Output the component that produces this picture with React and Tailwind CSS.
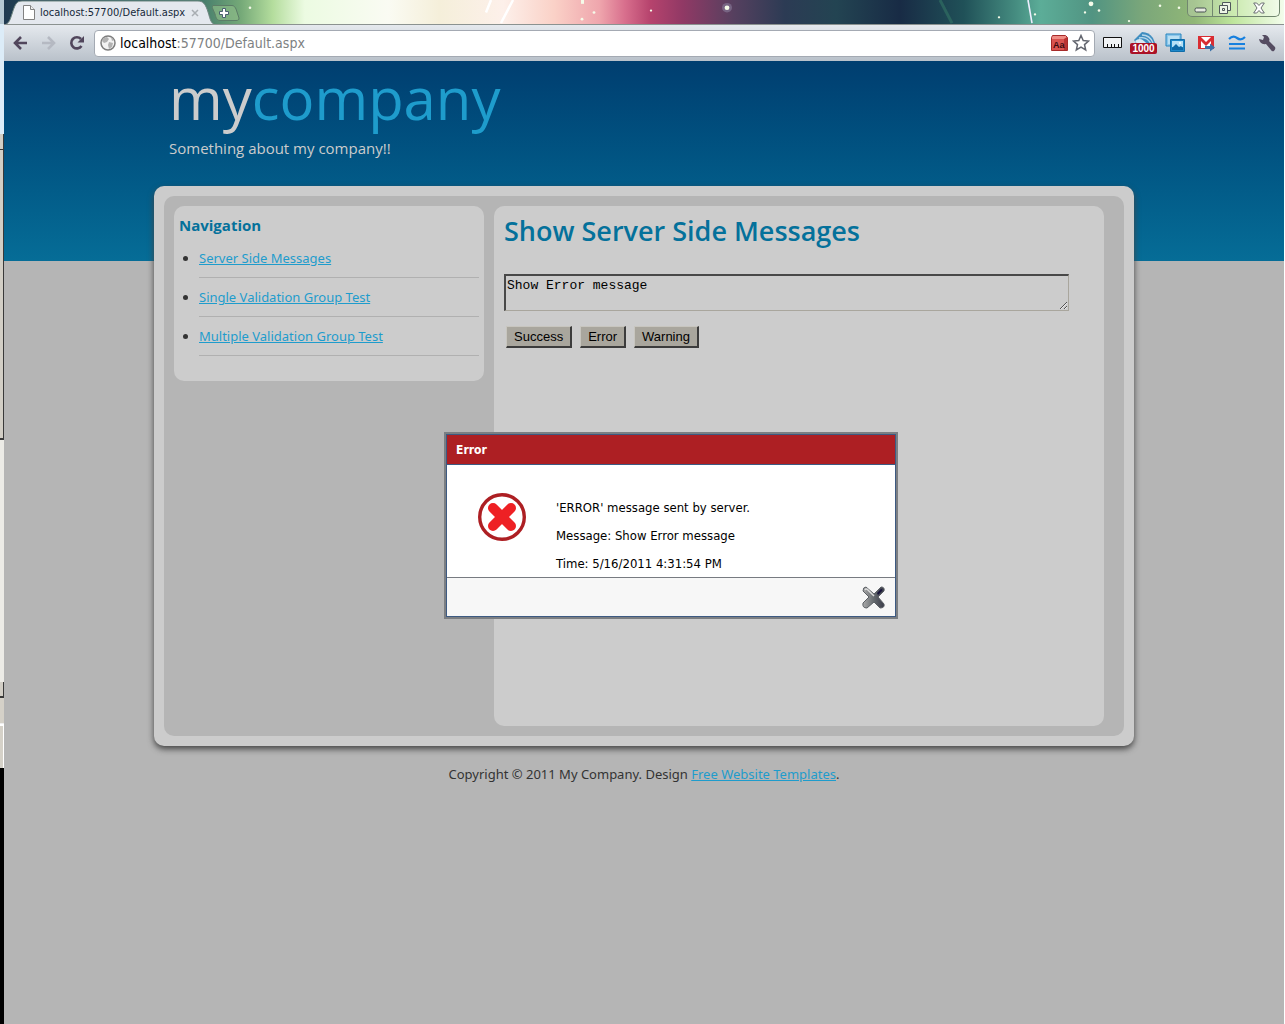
import React from "react";

const navLinks = [
  "Server Side Messages",
  "Single Validation Group Test",
  "Multiple Validation Group Test",
];

function Wallpaper() {
  return (
    <svg className="absolute inset-0 h-full w-full" viewBox="0 0 1280 25" preserveAspectRatio="none" aria-hidden="true">
      <defs>
        <linearGradient id="aurora" x1="0" x2="1" y1="0" y2="0">
          <stop offset="0" stopColor="#203a50" />
          <stop offset=".1" stopColor="#2f6864" />
          <stop offset=".155" stopColor="#467d6c" />
          <stop offset=".185" stopColor="#75a978" />
          <stop offset=".21" stopColor="#b4dd9d" />
          <stop offset=".235" stopColor="#ecfbe2" />
          <stop offset=".3" stopColor="#fafbf3" />
          <stop offset=".34" stopColor="#f5efda" />
          <stop offset=".39" stopColor="#fdf0ea" />
          <stop offset=".43" stopColor="#fad1c7" />
          <stop offset=".465" stopColor="#efa6ad" />
          <stop offset=".485" stopColor="#d86f8d" />
          <stop offset=".505" stopColor="#b6436d" />
          <stop offset=".53" stopColor="#913965" />
          <stop offset=".57" stopColor="#56405f" />
          <stop offset=".61" stopColor="#2c3b54" />
          <stop offset=".65" stopColor="#234452" />
          <stop offset=".7" stopColor="#182b45" />
          <stop offset=".75" stopColor="#205158" />
          <stop offset=".79" stopColor="#458c80" />
          <stop offset=".81" stopColor="#5cad98" />
          <stop offset=".85" stopColor="#519482" />
          <stop offset=".89" stopColor="#7ba77a" />
          <stop offset=".93" stopColor="#91b777" />
          <stop offset=".96" stopColor="#bee59c" />
          <stop offset="1" stopColor="#f3fdec" />
        </linearGradient>
      </defs>
      <rect width="1280" height="25" fill="url(#aurora)" />
      <g stroke="#fff">
        <path d="M487 0l-5 13M509 0l-12 24" strokeWidth="2.5" />
        <path d="M1024 0l4 24" stroke="#eef" strokeWidth="1.6" />
        <path d="M936 0l12 24" stroke="#347565" strokeWidth="3" opacity=".6" />
      </g>
      <g fill="#f5fbe9">
        <circle cx="723" cy="8" r="5" fill="#897d9b" opacity=".6" />
        <circle cx="723" cy="8" r="2.4" />
        <circle cx="1087" cy="4" r="2.4" />
        <circle cx="1081" cy="13" r="1.2" />
        <circle cx="1095" cy="11" r="1.3" />
        <circle cx="1156" cy="6" r="1.3" />
        <circle cx="1175" cy="8" r="1.3" />
        <circle cx="1125" cy="22" r="1.2" />
        <circle cx="995" cy="18" r="1.2" />
        <circle cx="1031" cy="15" r="1.2" />
        <circle cx="246" cy="8" r="1.3" />
        <rect x="577" y="0" width="3" height="4" />
        <circle cx="578" cy="20" r="1.4" />
        <circle cx="590" cy="13" r="1.4" />
        <circle cx="647" cy="11" r="1.2" />
      </g>
    </svg>
  );
}

function TabStrip() {
  return (
    <div className="relative flex h-[25px] justify-between overflow-hidden border-b border-[#8b9290]">
      <Wallpaper />
      <div className="relative flex">
        <div className="relative flex h-[25px] w-[212px] items-center pl-[19px]">
          <svg className="absolute inset-0" width="212" height="25" viewBox="0 0 212 25" aria-hidden="true">
            <path d="M0 25C5 24 6 20 8 14C11 5 12 1 18 1H194C199 1 201 4 203 9C206 17 206 24 212 25Z" fill="#e4e8ee" stroke="#6f8580" />
          </svg>
          <svg className="relative" width="12" height="15" viewBox="0 0 12 15" aria-hidden="true">
            <path d="M.5.5H7.500L11.500 4.500V14.500H.5Z" fill="#fff" stroke="#828282" />
            <path d="M7.500.5V4.500H11.500" fill="#eee" stroke="#828282" />
          </svg>
          <span className="relative ml-[5px] w-[151px] whitespace-nowrap font-['DejaVu_Sans_Condensed','Noto_Sans',sans-serif] text-[11px] leading-4 text-[#16283a]">localhost:57700/Default.aspx</span>
          <button type="button" aria-label="Close tab" className="relative">
            <svg width="8" height="8" viewBox="0 0 8 8"><path d="M1 1l6 6M7 1l-6 6" stroke="#a8adb2" strokeWidth="1.500" /></svg>
          </button>
        </div>
        <button type="button" aria-label="New tab" className="relative -ml-1 h-[22px]">
          <svg width="28" height="22" viewBox="0 0 28 22">
            <path d="M1 5.500H20C22 5.500 23 7 24 9L27 18C27 20 26 20.500 24 20.500H8C5 20.500 4 18 3 14L0 7Z" fill="#8fbd88" fillOpacity=".65" stroke="#5c7d67" />
            <path d="M10.500 8.500h3v3h3v3h-3v3h-3v-3h-3v-3h3z" fill="#fff" stroke="#496170" />
          </svg>
        </button>
      </div>
      <div className="relative mr-1 flex h-[17px] overflow-hidden rounded-b-[5px] border border-t-0 border-[#71876f] bg-white/20">
        <button type="button" aria-label="Minimize" className="grid w-[25px] place-items-center border-r border-[#71876f]">
          <svg width="13" height="16" viewBox="0 0 13 16"><rect x="1" y="8" width="11" height="4" rx="1.500" fill="#e6eadf" stroke="#454f50" /></svg>
        </button>
        <button type="button" aria-label="Restore" className="grid w-[25px] place-items-center border-r border-[#8c9688]">
          <svg width="14" height="14" viewBox="0 0 14 14" fill="#eef5e6" stroke="#50585c"><path d="M4.500 1.500h8v8h-8z" /><path d="M1.500 4.500h8v8h-8z" /><path d="M4.500 7.500h2v2h-2z" /></svg>
        </button>
        <button type="button" aria-label="Close" className="grid w-[41px] place-items-center">
          <svg width="12" height="12" viewBox="0 0 12 12"><path d="M.7 1h3l2.300 2.500L8.300 1h3L8 6l3.300 5h-3L6 8.500 3.700 11h-3L4 6z" fill="#fff" stroke="#6a6f72" /></svg>
        </button>
      </div>
    </div>
  );
}

function Toolbar() {
  return (
    <div className="flex h-9 items-center bg-linear-to-b from-[#e5e9ee] to-[#b9c1ca] pl-[9px] pr-2">
      <button type="button" aria-label="Back">
        <svg width="15" height="14" viewBox="0 0 15 14" fill="none" stroke="#51465c" strokeWidth="2.600"><path d="M14 7H2M8 1L2 7l6 6" /></svg>
      </button>
      <button type="button" aria-label="Forward" className="ml-[13px]">
        <svg width="15" height="14" viewBox="0 0 15 14" fill="none" stroke="#b5b9c2" strokeWidth="2.600"><path d="M1 7h12M7 1l6 6-6 6" /></svg>
      </button>
      <button type="button" aria-label="Reload" className="ml-[13px]">
        <svg width="16" height="16" viewBox="0 0 16 16"><path d="M12.500 11A5.600 5.600 0 1 1 12 4" fill="none" stroke="#51465c" strokeWidth="2.600" /><path d="M15 1v6.500H8.500z" fill="#51465c" /></svg>
      </button>
      <div className="ml-[9px] flex h-[27px] min-w-0 flex-1 items-center rounded border border-[#a4aab3] bg-white pl-[5px] pr-1">
        <svg width="16" height="16" viewBox="0 0 16 16" aria-hidden="true">
          <circle cx="8" cy="8" r="7" fill="#f2f2f2" stroke="#7d7d7d" strokeWidth="1.500" />
          <path d="M3 3l4-1 2 2-2 3-3 1-2-2zM9 7l4 1-1 4-3 2-1-4zM11 2l3 3-2 1z" fill="#b2b2b2" />
        </svg>
        <div className="ml-1 flex min-w-0 flex-1 font-['DejaVu_Sans_Condensed','Noto_Sans',sans-serif] text-[14px] leading-5">
          <label htmlFor="address" className="text-black">localhost</label>
          <input id="address" type="text" defaultValue=":57700/Default.aspx" className="min-w-0 flex-1 bg-transparent text-[#7d8182] outline-none" />
        </div>
        <button type="button" aria-label="Dictionary">
          <svg width="18" height="18" viewBox="0 0 18 18"><path d="M2.500 1.500h13l2 2v13h-16v-13z" fill="#ef8c84" stroke="#a62b2a" /><path d="M2 5h12v11H2z" fill="#d9534f" /><path d="M14 5l3-2v13h-3" fill="#b33" /><text x="3" y="14" fontSize="9" fontWeight="bold" fontFamily="Liberation Sans, sans-serif" fill="#3b0a10">Aa</text></svg>
        </button>
        <button type="button" aria-label="Bookmark" className="ml-1">
          <svg width="18" height="18" viewBox="0 0 18 18"><path d="M9 1.500l2.200 5 5.300.500-4 3.600 1.200 5.400L9 13.200 4.300 16l1.200-5.400-4-3.600 5.300-.5z" fill="#fff" stroke="#63666f" strokeWidth="1.500" /></svg>
        </button>
      </div>
      <div className="ml-2 flex items-center gap-3">
        <button type="button" aria-label="Ruler">
          <svg width="19" height="12" viewBox="0 0 19 12"><path d="M.5.5h18v10H.5z" fill="#f1f3f5" stroke="#111" /><path d="M4.500 10V7M8.500 10V7M11.500 10V7M15.500 10V7" stroke="#111" /></svg>
        </button>
        <button type="button" aria-label="Feed, 1000 items" className="-mx-1">
          <svg width="27" height="24" viewBox="0 0 27 24">
            <path d="M4 9L12 1q7 0 11 6l2 5-5 3H8z" fill="#3f8dc0" />
            <path d="M5 10q5-4 9 0t6 4H8z" fill="#d9e9f3" />
            <path d="M9 7q8-2 12 6M12 4q8 0 11 8" fill="none" stroke="#b9d8ea" strokeWidth="1.300" />
            <rect y="12" width="27" height="11" rx="2" fill="#ab1126" />
            <text x="13.500" y="21" textAnchor="middle" fontSize="10" fontWeight="bold" fontFamily="Liberation Sans, sans-serif" fill="#fff">1000</text>
          </svg>
        </button>
        <button type="button" aria-label="Pictures">
          <svg width="20" height="20" viewBox="0 0 20 20"><path d="M1 1h15v12H1z" fill="#8cc6ea" stroke="#2685bf" /><path d="M3 3h11v8H3z" fill="#b9dff3" /><path d="M5.500 6.500h14v12h-14z" fill="#1d87c9" stroke="#106da9" /><path d="M7 8h11v6H7z" fill="#b5e0f6" /><path d="M7 15l4-4 3 3 2-1 2 2v2H7z" fill="#0d68a6" /><circle cx="15" cy="10" r="1" fill="#fff" /></svg>
        </button>
        <button type="button" aria-label="Mail">
          <svg width="19" height="17" viewBox="0 0 19 17"><path d="M1.500 1.500h15v12h-15z" fill="#fff" stroke="#d92d32" /><path d="M1 1h2l6 6 6-6h2v13h-3V6L9 11 4 6v8H1z" fill="#d92d32" /><path d="M8 11h5V8.500l5 4-5 4V14H8z" fill="#3a71a8" /></svg>
        </button>
        <button type="button" aria-label="Approximate">
          <svg width="18" height="16" viewBox="0 0 18 16" fill="none" stroke="#1780df" strokeWidth="2.200"><path d="M1 4q4-4 8-1t8-1M1 9h16M1 13.500h16" /></svg>
        </button>
        <button type="button" aria-label="Settings">
          <svg width="18" height="17" viewBox="0 0 18 17"><path d="M1 4l4 1 1-3-2-2q5-1 7 3 1 2 0 3l6 6q1 2-1 4-2 1-3-1L8 9Q2 10 1 4z" fill="#554c61" /></svg>
        </button>
      </div>
    </div>
  );
}

function WindowEdge() {
  return (
    <div className="flex w-1 shrink-0 flex-col bg-black" aria-hidden="true">
      <div className="h-6 bg-[#b7c9d3]" />
      <div className="h-[110px] bg-[#dcecf8]" />
      <div className="h-4 border-b border-r border-[#393939] bg-[#d2cec5]" />
      <div className="h-[290px] border-b-2 border-r border-[#393939] bg-[#d2cec5]" />
      <div className="h-[242px] bg-[#ecebe6]" />
      <div className="h-4 border-b-2 border-r border-[#393939] bg-[#d2cec5]" />
      <div className="h-[26px] border-b border-[#eee] bg-[#d5d1c8]" />
      <div className="h-11 border-t-2 border-r border-white bg-[#d5d1c8]" />
    </div>
  );
}

function ErrorDialog() {
  return (
    <div role="dialog" aria-labelledby="dialog-title" className="absolute top-[226px] -left-[50px] w-[454px] border-2 border-[#7b7e82] bg-white font-['DejaVu_Sans_Condensed','Noto_Sans',sans-serif] text-[13px] text-black">
      <div className="border border-[#3d5a82]">
        <h2 id="dialog-title" className="border-b border-[#3d5a82] bg-[#ad1f23] px-[9px] pt-[7px] pb-1.5 text-[12px] leading-4 font-bold text-white">Error</h2>
        <div className="flex gap-[30px] pt-7 pl-[31px]">
          <svg width="48" height="48" viewBox="0 0 48 48" aria-hidden="true">
            <circle cx="24" cy="24" r="22.300" fill="#fff" stroke="#ad1f23" strokeWidth="3.400" />
            <path d="M15 15L33 33M33 15L15 33" stroke="#ee2024" strokeWidth="10" strokeLinecap="round" />
          </svg>
          <div className="flex flex-col gap-3 pt-[7px] pb-[5px] leading-4">
            <p>'ERROR' message sent by server.</p>
            <p>Message: Show Error message</p>
            <p>Time: 5/16/2011 4:31:54 PM</p>
          </div>
        </div>
        <div className="flex h-[39px] items-center justify-end border-t border-[#777b81] bg-[#f7f7f7] pr-2.5">
          <button type="button" aria-label="Close message">
            <svg width="23" height="23" viewBox="0 0 23 23">
              <defs><linearGradient id="steel" x1="0" x2="1" y1="0" y2="0"><stop stopColor="#aaa" /><stop offset=".5" stopColor="#676c70" /><stop offset="1" stopColor="#3a3c49" /></linearGradient></defs>
              <path d="M4 1l8 7 7-7q4 0 3 4l-6 6 6 7q1 4-4 4l-6-6-7 6q-5 0-4-5l6-6-6-6q0-4 3-4z" fill="url(#steel)" stroke="#5c6065" />
              <path d="M15 7l4-4q2 0 1 2l-4 4z" fill="#17133a" /><path d="M3 4q1-2 3 0l6 6" fill="none" stroke="#ddd" strokeWidth="1.500" />
            </svg>
          </button>
        </div>
      </div>
    </div>
  );
}

const buttonClass =
  "h-[22px] border border-t-[#c8c6bf] border-l-[#c8c6bf] border-r-2 border-b-2 border-r-[#3c3c3c] border-b-[#3c3c3c] bg-[#a9a69d] px-[7px] font-['Liberation_Sans',Arial,sans-serif] text-[13px] leading-5 text-black";

export default function App() {
  return (
    <div className="flex min-h-screen border-r border-white bg-[#b5b5b5] font-['Noto_Sans','Open_Sans',sans-serif] text-[13px] text-[#333]">
      <WindowEdge />
      <div className="min-w-0 flex-1">
        <TabStrip />
        <Toolbar />
        <header className="h-[200px] bg-linear-to-b from-[#003e70] to-[#066d97] font-['Open_Sans','Noto_Sans',sans-serif]">
          <div className="mx-auto w-full max-w-[980px] px-[15px]">
            <h1 className="pt-px text-[58px] leading-[72px] text-[#ccc]">my<span className="text-[#1e9ccc]">company</span></h1>
            <p className="mt-1 text-[15px] leading-5 text-[#ccc]">Something about my company!!</p>
          </div>
        </header>
        <main className="relative mx-auto -mt-[75px] w-full max-w-[980px] rounded-[10px] bg-[#ccc] p-2.5 shadow-[0_3px_6px_#444]">
          <div className="flex items-start gap-2.5 rounded-[10px] bg-[#b5b5b5] p-2.5 pr-5">
            <nav className="w-[310px] shrink-0 rounded-[10px] bg-[#ccc] px-[5px] pt-2 pb-[25px]">
              <h2 className="font-['Open_Sans','Noto_Sans',sans-serif] text-[15px] leading-[22px] font-bold text-[#04719b]">Navigation</h2>
              <ul className="list-disc pt-[3px] pl-5">
                {navLinks.map((label) => (
                  <li key={label} className="border-b border-[#b0b0b0] py-[9px] leading-5">
                    <a href="#" className="text-[#1e9ccc] underline">{label}</a>
                  </li>
                ))}
              </ul>
            </nav>
            <section className="relative min-h-[520px] min-w-0 flex-1 rounded-[10px] bg-[#ccc] px-2.5 pt-[7px]">
              <h2 className="font-['Open_Sans','Noto_Sans',sans-serif] text-[27px] leading-9 font-semibold text-[#04719b]">Show Server Side Messages</h2>
              <textarea id="message" aria-label="Message" defaultValue="Show Error message" className="mt-[25px] block h-[37px] w-[565px] max-w-full border border-t-2 border-t-[#484848] border-l-2 border-l-[#484848] border-r-[#a9a69d] border-b-[#a9a69d] bg-transparent px-px py-0 font-['Liberation_Mono','Courier_New',monospace] text-[13px] leading-5 text-black" />
              <div className="mt-[15px] flex gap-2 pl-0.5">
                <button type="button" className={buttonClass}>Success</button>
                <button type="button" className={buttonClass}>Error</button>
                <button type="button" className={buttonClass}>Warning</button>
              </div>
              <ErrorDialog />
            </section>
          </div>
        </main>
        <footer className="pt-[18px] text-center leading-5">
          Copyright © 2011 My Company. Design <a href="#" className="text-[#1e9ccc] underline">Free Website Templates</a>.
        </footer>
      </div>
    </div>
  );
}
